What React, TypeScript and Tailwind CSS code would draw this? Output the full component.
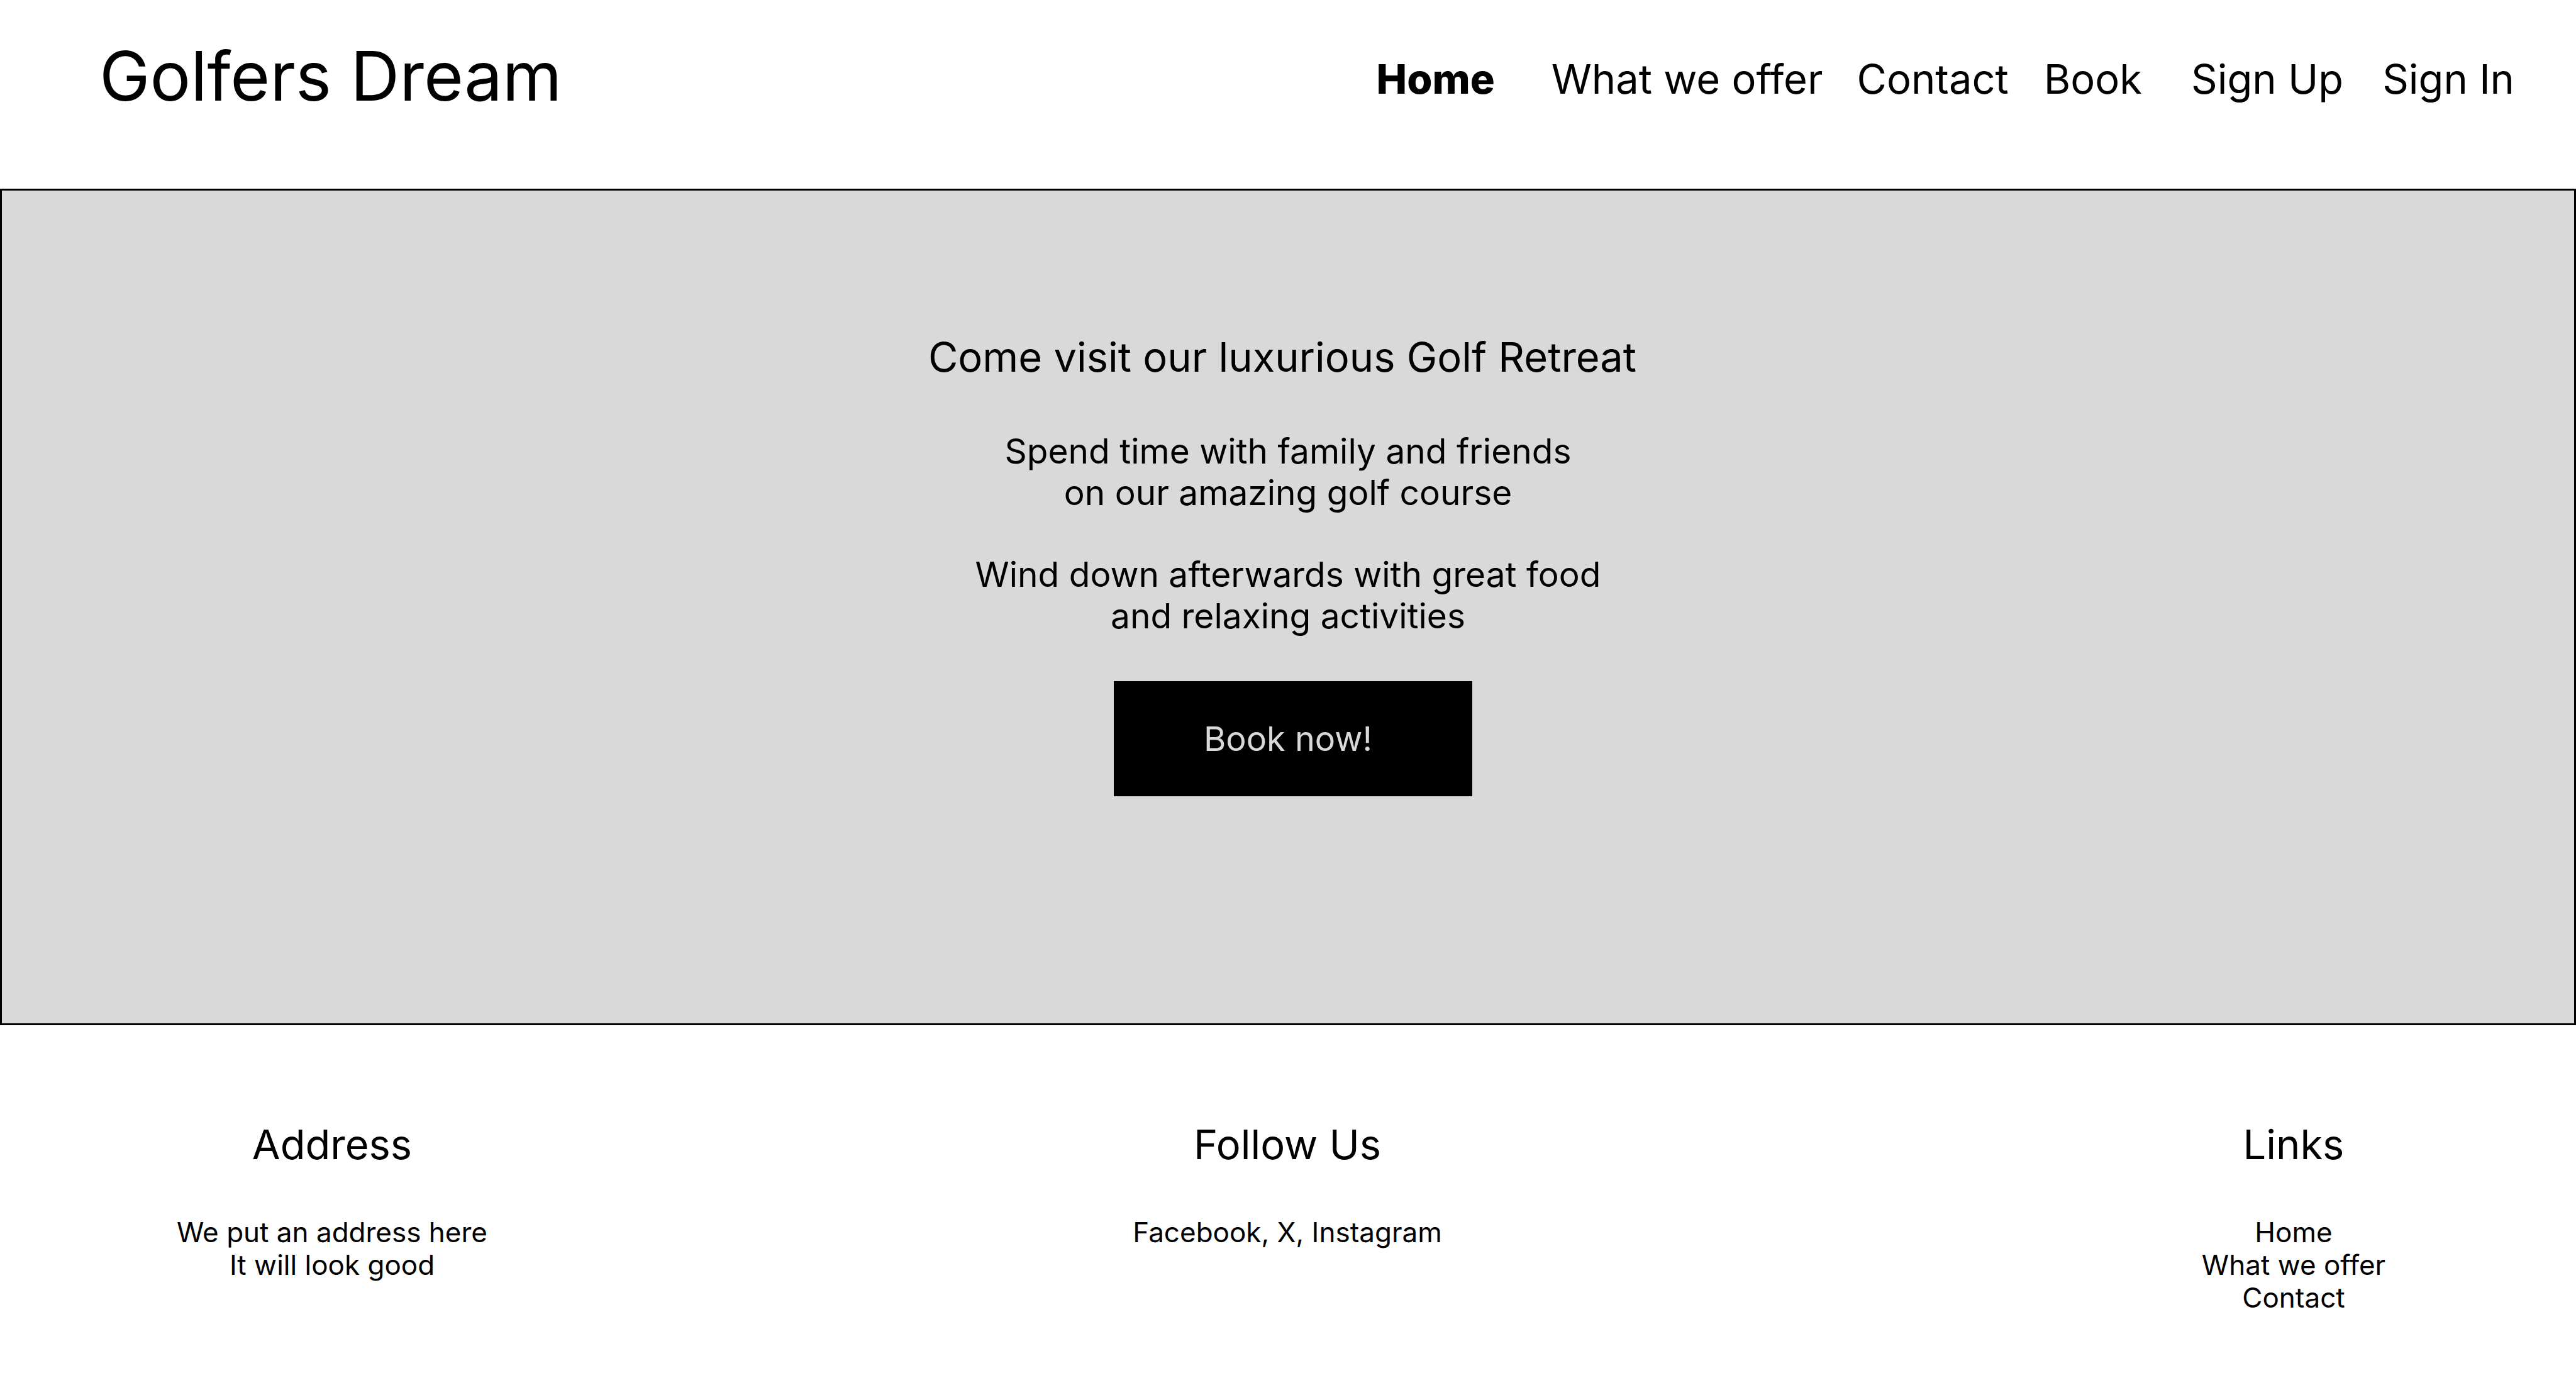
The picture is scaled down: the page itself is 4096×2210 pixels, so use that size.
const navLinks = [
  { label: 'Home', className: 'font-extrabold mr-[90px]' },
  { label: 'What we offer', className: 'mr-[54px]' },
  { label: 'Contact', className: 'mr-[56px]' },
  { label: 'Book', className: 'mr-[78px]' },
  { label: 'Sign Up', className: 'mr-[62px]' },
  { label: 'Sign In', className: '' },
];

const footerLinks = ['Home', 'What we offer', 'Contact'];

function Header() {
  return (
    <header className="flex items-start justify-between pt-[55px] pr-[98px] pb-[113px] pl-[158px]">
      <h1 className="text-[108px] leading-[132px] whitespace-nowrap">Golfers Dream</h1>
      <nav className="mt-[31px] flex text-[65px] leading-[80px] whitespace-nowrap" aria-label="Main">
        {navLinks.map((link) => (
          <a key={link.label} href="#" className={link.className}>
            {link.label}
          </a>
        ))}
      </nav>
    </header>
  );
}

function Hero() {
  return (
    <section className="flex flex-col items-center border-[3px] border-black bg-[#d9d9d9] pt-[225px] pb-[361px] text-center">
      <h2 className="mr-[18px] text-[65px] leading-[80px]">Come visit our luxurious Golf Retreat</h2>
      <div className="mt-[76px] flex flex-col gap-[64px] text-[55px] leading-[66px]">
        <p>
          Spend time with family and friends
          <br />
          on our amazing golf course
        </p>
        <p>
          Wind down afterwards with great food
          <br />
          and relaxing activities
        </p>
      </div>
      <button
        type="button"
        className="mt-[71px] ml-[16px] h-[183px] w-[570px] bg-black pr-[16px] text-[54px] leading-[66px] text-[#d9d9d9]"
      >
        Book now!
      </button>
    </section>
  );
}

function Footer() {
  return (
    <footer className="grid grid-cols-[1056px_1fr_898px] pt-[150px] text-center text-[44px] leading-[52px]">
      <section>
        <h3 className="mb-[73px] text-[65px] leading-[80px]">Address</h3>
        <p>
          We put an address here
          <br />
          It will look good
        </p>
      </section>
      <section className="pr-[160px]">
        <h3 className="mb-[73px] text-[65px] leading-[80px]">Follow Us</h3>
        <p>Facebook, X, Instagram</p>
      </section>
      <section>
        <h3 className="mb-[73px] text-[65px] leading-[80px]">Links</h3>
        <ul>
          {footerLinks.map((label) => (
            <li key={label}>
              <a href="#">{label}</a>
            </li>
          ))}
        </ul>
      </section>
    </footer>
  );
}

export default function App() {
  return (
    <div className="min-h-screen bg-white font-['Inter',sans-serif] text-black">
      <Header />
      <main>
        <Hero />
      </main>
      <Footer />
    </div>
  );
}
